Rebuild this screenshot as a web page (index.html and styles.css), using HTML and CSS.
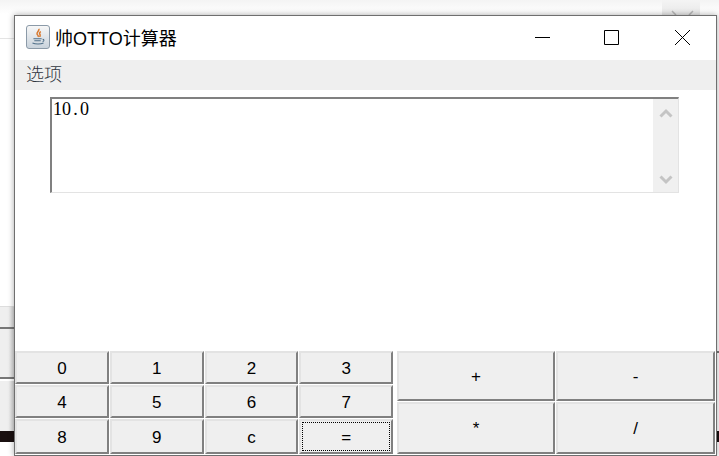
FILE: index.html
```html
<!DOCTYPE html>
<html>
<head>
  <title>帅OTTO计算器</title>
  <link rel="stylesheet" href="styles.css">
</head>
<body>
  <div class="desk">
    <div class="desk-line line-top"></div>
    <div class="desk-band band-one"></div>
    <div class="desk-band band-two"></div>
    <div class="desk-band band-three"></div>
    <div class="desk-bar"></div>
    <div class="desk-mark"></div>
    <div class="desk-tab">
      <svg width="38" height="15" viewBox="0 0 38 15"><path d="M10 11l4 4M27 15l4-4" stroke="#b5b5b5" stroke-width="1.500" fill="none"/></svg>
    </div>
  </div>

  <div class="window">
    <div class="titlebar">
      <div class="app-icon">
        <svg width="22" height="22" viewBox="0 0 24 24">
          <path d="M13 3c1 2-3 4-2 6s2 1 1 3M15 6c-1 1-2 2-1 3s0 2 0 3" fill="none" stroke="#d9772b" stroke-width="1.600"/>
          <path d="M7 14h9M8 16h7M6 18.500c3 1.500 9 1.500 12 0M17 14.500c2 0 2 2 0 2.500" fill="none" stroke="#4f6f88" stroke-width="1.100"/>
        </svg>
      </div>
      <span class="title">帅OTTO计算器</span>
      <div class="controls">
        <svg class="control" width="15" height="15" viewBox="0 0 15 15"><path d="M0 7.500h15" stroke="#000" fill="none"/></svg>
        <svg class="control" width="15" height="15" viewBox="0 0 15 15"><path d="M.5 .5h14v14h-14z" stroke="#000" fill="none"/></svg>
        <svg class="control close" width="15" height="15" viewBox="0 0 15 15"><path d="M0 0l15 15M15 0L0 15" stroke="#000" fill="none"/></svg>
      </div>
    </div>

    <div class="menubar"><span class="menu-item">选项</span></div>

    <div class="content">
      <div class="display">
        <div class="display-text">10<span class="dot">.</span>0</div>
        <div class="scrollbar">
          <svg width="14" height="10" viewBox="0 0 14 10"><path d="M1.500 8.500L7 3 12.500 8.500" fill="none" stroke="#c4c4c4" stroke-width="3"/></svg>
          <svg width="14" height="10" viewBox="0 0 14 10"><path d="M1.500 1.500L7 7 12.500 1.500" fill="none" stroke="#c4c4c4" stroke-width="3"/></svg>
        </div>
      </div>
    </div>

    <div class="keypad">
      <div class="keys digits">
        <button class="key">0</button>
        <button class="key">1</button>
        <button class="key">2</button>
        <button class="key">3</button>
        <button class="key">4</button>
        <button class="key">5</button>
        <button class="key">6</button>
        <button class="key">7</button>
        <button class="key">8</button>
        <button class="key">9</button>
        <button class="key">c</button>
        <button class="key focused"><span class="focus-ring">=</span></button>
      </div>
      <div class="keys ops">
        <button class="key">+</button>
        <button class="key">-</button>
        <button class="key">*</button>
        <button class="key">/</button>
      </div>
    </div>
  </div>
</body>
</html>
```

FILE: styles.css
```css
html, body {
  margin: 0;
  padding: 0;
  height: 100%;
  overflow: hidden;
  background-color: #fff;
}

body {
  width: 719px;
  height: 456px;
  position: relative;
  font-family: "Liberation Sans", "Noto Sans CJK SC", sans-serif;
}

/* Stuff behind the window */
.desk {
  position: absolute;
  top: 0;
  left: 0;
  width: 719px;
  height: 456px;
  background: linear-gradient(to bottom, #f4f4f4, #fff 14px);
}

.desk-line {
  position: absolute;
  left: 0;
  width: 14px;
}

.line-top {
  top: 38px;
  height: 1px;
  background-color: #e4e4e4;
}

.desk-band {
  position: absolute;
  left: 0;
  width: 14px;
  background: linear-gradient(to right, #efefef 60%, #d4d4d4);
}

.band-one {
  top: 306px;
  height: 20px;
  border-top: 1px solid #ddd;
  border-bottom: 2px solid #777;
}

.band-two {
  top: 329px;
  height: 48px;
  border-bottom: 2px solid #777;
}

.band-three {
  top: 381px;
  height: 50px;
}

.desk-bar {
  position: absolute;
  top: 431px;
  left: 0;
  width: 719px;
  height: 11px;
  background-color: #1a1010;
}

.desk-mark {
  position: absolute;
  top: 351px;
  left: 717px;
  width: 2px;
  height: 2px;
  background-color: #777;
}

.desk-tab {
  position: absolute;
  top: 0;
  left: 662px;
  width: 38px;
  height: 15px;
  background: linear-gradient(to bottom, #f4f4f4, #e8e8e8);
}

.desk-tab svg {
  display: block;
}

/* Window */
.window {
  position: absolute;
  top: 15px;
  left: 14px;
  width: 703px;
  height: 441px;
  box-sizing: border-box;
  display: flex;
  flex-direction: column;
  background-color: white;
  border: 1px solid #6f6f6f;
  box-shadow: 0 0 6px rgba(0, 0, 0, 0.35);
}

.titlebar {
  height: 44px;
  box-sizing: border-box;
  display: flex;
  align-items: center;
  padding: 0 0 2px 11px;
  flex-shrink: 0;
}

.app-icon {
  width: 22px;
  height: 22px;
  border: 1px solid #8b9aa8;
  border-radius: 3px;
  background: linear-gradient(to bottom, #f7f7f7, #c9d3dc);
  display: flex;
  align-items: center;
  justify-content: center;
  overflow: hidden;
}

.title {
  margin-left: 5px;
  font-size: 18px;
  color: #000;
}

.controls {
  margin-left: auto;
  display: flex;
  gap: 54px;
  padding-right: 26px;
}

.control {
  display: block;
}

.close {
  margin-left: 2px;
}

.menubar {
  height: 30px;
  box-sizing: border-box;
  flex-shrink: 0;
  background-color: #efefef;
  display: flex;
  align-items: center;
  padding: 0 0 5px 11px;
}

.menu-item {
  font-family: "Noto Sans CJK SC", sans-serif;
  font-size: 18px;
  font-weight: 300;
  color: #2f3640;
}

.content {
  flex: 1;
  padding: 7px 37px 0 35px;
}

.display {
  height: 96px;
  box-sizing: border-box;
  display: flex;
  border-top: 2px solid #808080;
  border-left: 2px solid #808080;
  border-right: 1px solid #e3e3e3;
  border-bottom: 1px solid #e3e3e3;
}

.display-text {
  flex: 1;
  padding: 0 0 0 1px;
  font-family: "Liberation Serif", "Noto Sans CJK SC", serif;
  font-size: 18px;
  line-height: 20px;
  color: #000;
}

.dot {
  display: inline-block;
  width: 9px;
  text-align: center;
}

.scrollbar {
  width: 25px;
  background-color: #f0f0f0;
  display: flex;
  flex-direction: column;
  align-items: center;
  justify-content: space-between;
  padding: 9px 0 7px;
}

/* Buttons */
.keypad {
  display: flex;
  gap: 4px;
  height: 103px;
  margin-bottom: 1px;
  padding-right: 1px;
  flex-shrink: 0;
}

.keys {
  display: grid;
  gap: 1px;
}

.digits {
  width: 378px;
  grid-template-columns: repeat(4, 1fr);
  grid-template-rows: 33px 33px 1fr;
}

.ops {
  flex: 1;
  grid-template-columns: 158px 1fr;
  grid-template-rows: 50px 1fr;
}

.key {
  margin: 0;
  padding: 2px 0 0;
  background-color: #efefef;
  border-style: solid;
  border-width: 2px;
  border-color: #e3e3e3 #808080 #808080 #e3e3e3;
  border-radius: 0;
  font-family: "Liberation Sans", sans-serif;
  font-size: 17px;
  color: #000;
}

.focused {
  padding: 1px;
}

.focus-ring {
  display: flex;
  align-items: center;
  justify-content: center;
  height: 100%;
  box-sizing: border-box;
  padding-top: 2px;
  border: 1px dotted #000;
}
```
